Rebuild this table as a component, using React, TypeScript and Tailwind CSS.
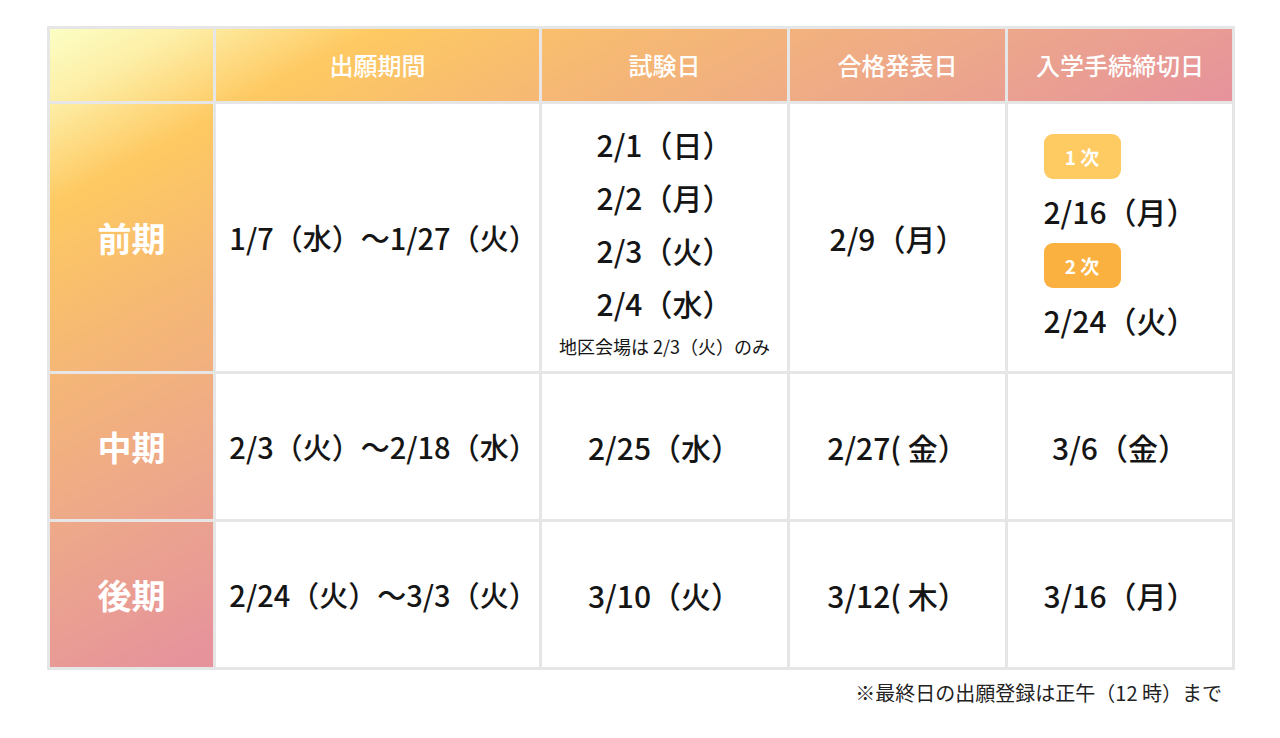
import React from "react";

// 入試日程表
const FONT = { fontFamily: '"Noto Sans CJK JP", "Noto Sans", sans-serif' };

const headers = ["出願期間", "試験日", "合格発表日", "入学手続締切日"];

function Badge({ label, tone }: { label: string; tone: "light" | "deep" }) {
  return (
    <div
      className={`w-[77px] h-[45px] rounded-[9px] flex items-center justify-center text-white font-bold text-[19px] ${
        tone === "light" ? "bg-[#fecb62]" : "bg-[#fbb13f]"
      }`}
    >
      {label}
    </div>
  );
}

export default function App() {
  const cell = "border-[3px] border-[#e6e6e6] text-center align-middle";
  const body = `${cell} bg-white text-[30px] font-medium text-[#151515] leading-none`;
  const range = `${cell} bg-white text-[29px] font-medium text-[#151515] leading-none whitespace-nowrap pl-[12px]`;
  const side = `${cell} text-white text-[34px] font-bold`;

  return (
    <div className="min-h-screen bg-white" style={FONT}>
      <div className="pt-[26px] pl-[47px]">
        <table className="table-fixed border-collapse w-[1185px] bg-[linear-gradient(to_bottom_right,#fbffc6_0%,#fdeea6_6%,#fec962_14%,#f5b775_27%,#eda88a_40%,#e6939b_55%,#e6939b_100%)]">
          <colgroup>
            <col className="w-[166px]" />
            <col className="w-[326px]" />
            <col className="w-[248px]" />
            <col className="w-[218px]" />
            <col className="w-[227px]" />
          </colgroup>
          <thead>
            <tr className="h-[75px]">
              <th className={cell}></th>
              {headers.map((h) => (
                <th key={h} className={`${cell} text-white text-[24px] font-medium`}>
                  {h}
                </th>
              ))}
            </tr>
          </thead>
          <tbody>
            <tr className="h-[270px]">
              <th className={side}>前期</th>
              <td className={range}>1/7（水）〜1/27（火）</td>
              <td className={body}>
                <div className="flex flex-col items-center">
                  <div className="h-[53px] flex items-center">2/1（日）</div>
                  <div className="h-[53px] flex items-center">2/2（月）</div>
                  <div className="h-[53px] flex items-center">2/3（火）</div>
                  <div className="h-[53px] flex items-center">2/4（水）</div>
                  <div className="mt-[4px] text-[18px] font-normal leading-[24px]">地区会場は 2/3（火）のみ</div>
                </div>
              </td>
              <td className={body}>2/9（月）</td>
              <td className={body}>
                <div className="inline-flex flex-col items-start gap-[6px] text-left pt-[4px]">
                  <Badge label="1 次" tone="light" />
                  <div className="h-[52px] flex items-center">2/16（月）</div>
                  <Badge label="2 次" tone="deep" />
                  <div className="h-[52px] flex items-center">2/24（火）</div>
                </div>
              </td>
            </tr>
            <tr className="h-[148px]">
              <th className={side}>中期</th>
              <td className={range}>2/3（火）〜2/18（水）</td>
              <td className={body}>2/25（水）</td>
              <td className={body}>2/27( 金）</td>
              <td className={body}>3/6（金）</td>
            </tr>
            <tr className="h-[148px]">
              <th className={side}>後期</th>
              <td className={range}>2/24（火）〜3/3（火）</td>
              <td className={body}>3/10（火）</td>
              <td className={body}>3/12( 木）</td>
              <td className={body}>3/16（月）</td>
            </tr>
          </tbody>
        </table>
        <p className="w-[1175px] text-right text-[20px] text-[#222] mt-[8px]">
          ※最終日の出願登録は正午（12 時）まで
        </p>
      </div>
    </div>
  );
}
